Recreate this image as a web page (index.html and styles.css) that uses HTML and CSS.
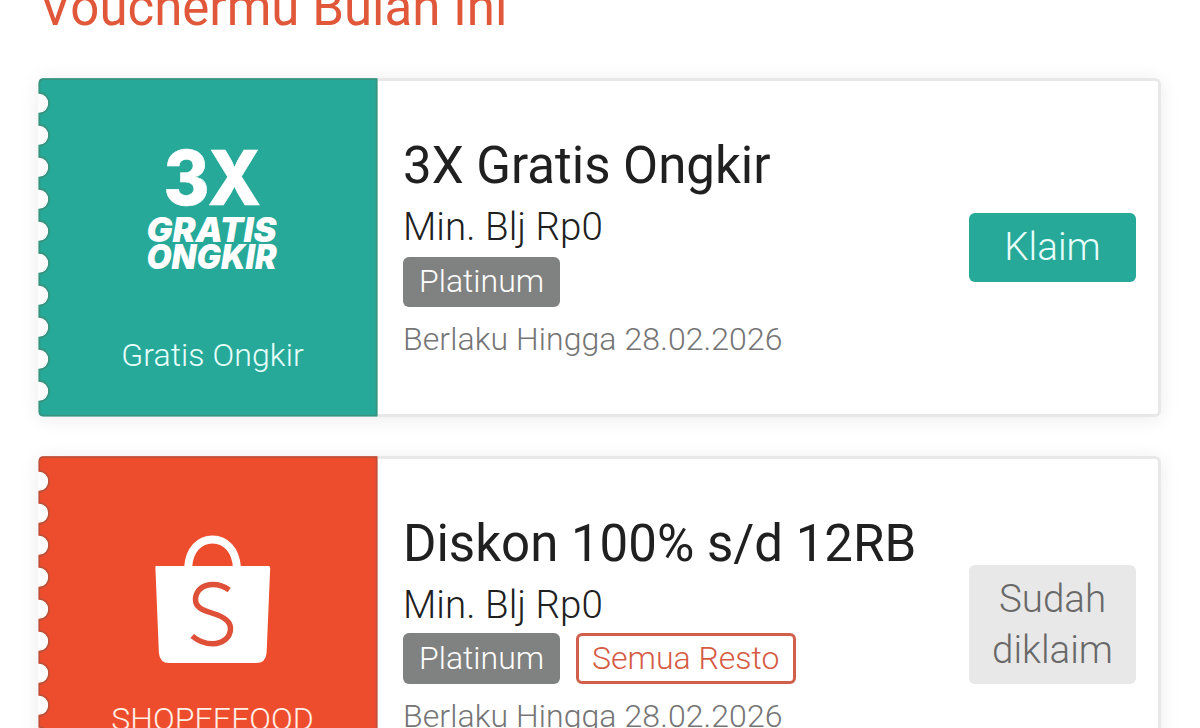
FILE: index.html
```html
<!DOCTYPE html>
<html lang="id">
<head>
<meta charset="utf-8">
<title>Vouchermu Bulan Ini</title>
<link rel="stylesheet" href="styles.css">
</head>
<body>
<svg class="defs" width="0" height="0" aria-hidden="true">
  <defs>
    <path id="ticket" d="M339.500 .2V338.400H5.500Q.5 338.400 .5 333.400V322.800h1a8.700 9.500 0 0 0 0-19h-1v-13h1a8.700 9.500 0 0 0 0-19h-1v-13h1a8.700 9.500 0 0 0 0-19h-1v-13h1a8.700 9.500 0 0 0 0-19h-1v-13h1a8.700 9.500 0 0 0 0-19h-1v-13h1a8.700 9.500 0 0 0 0-19h-1v-13h1a8.700 9.500 0 0 0 0-19h-1v-13h1a8.700 9.500 0 0 0 0-19h-1v-13h1a8.700 9.500 0 0 0 0-19h-1v-13h1a8.700 9.500 0 0 0 0-19h-1V5.200Q.5 .2 5.500 .2Z"/>
    <clipPath id="ticket-clip"><use href="#ticket"/></clipPath>
  </defs>
</svg>
<main class="page">
  <h1 class="heading">Vouchermu Bulan Ini</h1>
  <article class="voucher">
    <div class="stub stub-green">
      <svg class="stub-shape" viewBox="0 0 340 339"><use href="#ticket" clip-path="url(#ticket-clip)"/></svg>
      <svg class="stub-logo" viewBox="0 0 140 130">
        <g class="logo-text">
          <text class="logo-big" x="20.500" y="61.300" textLength="97.500" lengthAdjust="spacingAndGlyphs">3X</text>
          <text class="logo-small" x="3.500" y="97.600" textLength="130" lengthAdjust="spacingAndGlyphs">GRATIS</text>
          <text class="logo-small" x="3.500" y="124.600" textLength="130" lengthAdjust="spacingAndGlyphs">ONGKIR</text>
        </g>
      </svg>
      <span class="stub-label">Gratis Ongkir</span>
    </div>
    <div class="body">
      <div class="info">
        <h2 class="title">3X Gratis Ongkir</h2>
        <p class="minimum">Min. Blj Rp0</p>
        <div class="tags"><span class="tag tag-grey">Platinum</span></div>
        <p class="expiry">Berlaku Hingga 28.02.2026</p>
      </div>
      <button class="action action-claim">Klaim</button>
    </div>
  </article>
  <article class="voucher">
    <div class="stub stub-red">
      <svg class="stub-shape" viewBox="0 0 340 339"><use href="#ticket" clip-path="url(#ticket-clip)"/></svg>
      <svg class="stub-logo" viewBox="0 0 140 130">
        <g transform="translate(-.8 22)">
          <path class="bag" d="M13.800 22H126.200Q128 22 128 24L124.400 109Q123.500 119 114 119H27Q17.500 119 16.700 109L13.200 24Q13 22 13.800 22Z"/>
          <path class="bag-handle" d="M46 23C47 6 57-4.500 70.300-4.500S93.500 6 94.700 23"/>
          <path class="bag-s" d="M87 46C82 42.500 77 40.500 71 40.500C60 40.500 53.300 47 53.300 55.500C53.300 63.500 60 66 71 69.500C81 72.500 88.300 76.500 88.300 84.500C88.300 94 80 99.800 70.500 99.800C62.500 99.800 56 97 50 92"/>
        </g>
      </svg>
      <span class="stub-label stub-label-food">SHOPEEFOOD</span>
    </div>
    <div class="body">
      <div class="info">
        <h2 class="title">Diskon 100% s/d 12RB</h2>
        <p class="minimum">Min. Blj Rp0</p>
        <div class="tags tags-outlined"><span class="tag tag-grey">Platinum</span><span class="tag tag-outline">Semua Resto</span></div>
        <p class="expiry">Berlaku Hingga 28.02.2026</p>
      </div>
      <button class="action action-claimed">Sudah<br>diklaim</button>
    </div>
  </article>
</main>
</body>
</html>
```
FILE: styles.css
```css
* { box-sizing: border-box; margin: 0; padding: 0; }
html, body { width: 1200px; height: 728px; overflow: hidden; background: #fff; }
body { font-family: Roboto, "Liberation Sans", sans-serif; }
.defs { display: block; }
.page { height: 728px; overflow: hidden; padding: 0 38px; }
.heading {
  height: 78px; margin: 0 0 0 1px;
  font-size: 51px; font-weight: 400; line-height: 60px; color: #e0573a;
  white-space: nowrap; transform: translateY(-22px);
}
.voucher {
  display: flex; width: 1123.400px; height: 338.500px; margin-bottom: 39px;
  border-radius: 6px; background: #fff;
  box-shadow: 0 2px 20px rgba(0, 0, 0, .08);
}
.stub {
  position: relative; display: flex; flex-direction: column; align-items: center;
  width: 340px; padding: 66px 0 0 9px; background: #fcfcfc; border-radius: 6px 0 0 6px;
}
.stub-shape { position: absolute; left: 0; top: 0; width: 340px; height: 339px; }
.stub-green .stub-shape { fill: #27a999; stroke: #38937f; stroke-width: 3.500px; }
.stub-red .stub-shape { fill: #ee4d2d; stroke: #bf5038; stroke-width: 3.500px; }
.stub-logo { width: 140px; height: 130px; overflow: visible; z-index: 1; }
.logo-text { fill: #fff; font-family: Inter, Lato, sans-serif; font-weight: 800; }
.logo-big { font-size: 75px; stroke: #fff; stroke-width: .6px; }
.logo-small { font-size: 33.500px; font-style: italic; font-weight: 900; }
.bag { fill: #fff; }
.bag-handle { fill: none; stroke: #fff; stroke-width: 8px; }
.bag-s { fill: none; stroke: #df5038; stroke-width: 5.500px; }
.stub-label {
  z-index: 1; margin-top: 62px; font-size: 32px; line-height: 38px; font-weight: 300;
  letter-spacing: .1px; color: #e8fffc; white-space: nowrap;
}
.stub-label-food { margin-top: 48px; color: #fff0e6; }
.body {
  flex: 1; display: flex; justify-content: space-between; align-items: center;
  padding: 0 22.400px 0 25px; border: 3px solid #e8e8e8; border-left: 0; border-radius: 0 6px 6px 0;
}
.info { display: flex; flex-direction: column; height: 332px; padding-top: 54px; }
.title { font-size: 51px; line-height: 62px; font-weight: 400; color: #202020; white-space: nowrap; }
.minimum { margin-top: 8px; font-size: 38.500px; line-height: 44px; font-weight: 300; letter-spacing: .05px; color: #202020; }
.tags { display: flex; gap: 16px; margin-top: 8px; }
.tags-outlined { margin-top: 6px; }
.tag { height: 50px; border-radius: 6px; padding: 0 16px; font-size: 32px; line-height: 49px; font-weight: 300; white-space: nowrap; }
.tags-outlined .tag { height: 51px; line-height: 51px; }
.tag-grey { width: 157px; background: #808281; color: #fff; }
.tags-outlined .tag-outline { width: 219.500px; padding: 0 13px; border: 3px solid #d0604c; line-height: 45px; color: #d65b44; }
.expiry { margin-top: 13px; font-size: 32px; line-height: 38px; font-weight: 300; letter-spacing: .08px; color: #757575; white-space: nowrap; }
.action { width: 167px; border: 0; border-radius: 6px; font-family: inherit; font-size: 38.500px; line-height: 51px; font-weight: 300; text-align: center; }
.action-claim { height: 69px; padding-bottom: 2px; background: #27a999; color: #e8fffc; }
.action-claimed { height: 119px; padding-bottom: 2px; background: #e8e8e8; color: #686868; }
```
